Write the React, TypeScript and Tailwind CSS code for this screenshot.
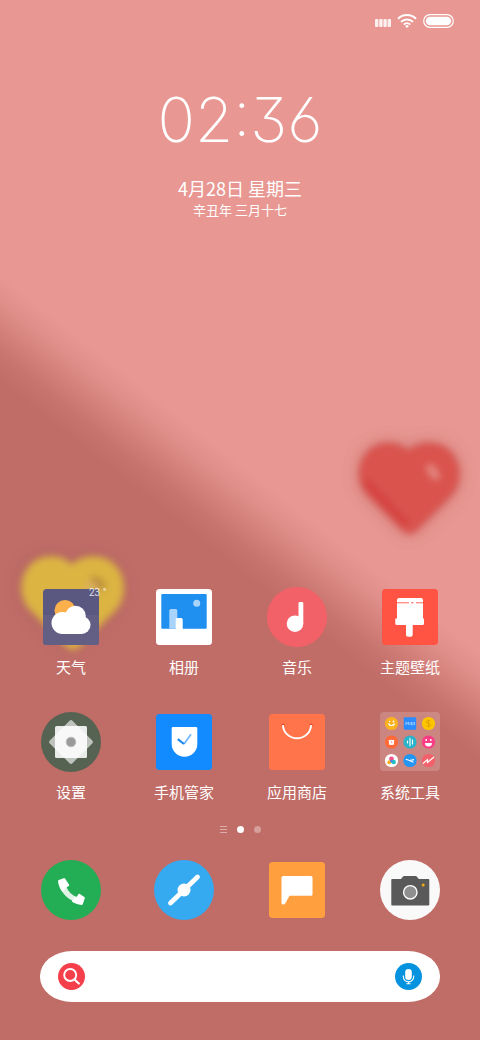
import type { ReactNode } from "react";

interface AppItem {
    name: string;
    icon: ReactNode;
    badge?: string;
}

const Icon = ({ children }: { children: ReactNode }) => (
    <svg viewBox="0 0 60 60" className="size-15" aria-hidden="true">
        {children}
    </svg>
);

const Tile = ({ fill }: { fill: string }) => (
    <rect x="2" y="2" width="56" height="56" rx="3.5" fill={fill} />
);

const Disc = ({ fill }: { fill: string }) => <circle cx="30" cy="30" r="30" fill={fill} />;

const WeatherIcon = () => (
    <Icon>
        <Tile fill="#5a5780" />
        <path d="M2 28h56v26.500a3.500 3.500 0 0 1-3.500 3.500h-49a3.500 3.500 0 0 1-3.500-3.500z" fill="#635f84" />
        <circle cx="24" cy="23.500" r="10.500" fill="#fbb04c" />
        <g fill="#fff">
            <circle cx="34.500" cy="29" r="10.300" />
            <circle cx="21.500" cy="36" r="11" />
            <circle cx="40.500" cy="38" r="9" />
            <rect x="21" y="34" width="20" height="13" />
        </g>
    </Icon>
);

const GalleryIcon = () => (
    <Icon>
        <Tile fill="#fff" />
        <rect x="7.300" y="7" width="45.400" height="34.700" rx="1" fill="#1f8ff0" />
        <path d="M15.300 41.700V23.500a1.500 1.500 0 0 1 1.500-1.500h5a1.500 1.500 0 0 1 1.500 1.500v18.200z" fill="#a8d3fa" />
        <path d="M21.700 43V32.500a1.500 1.500 0 0 1 1.500-1.500h4a1.500 1.500 0 0 1 1.500 1.500V43z" fill="#fff" />
        <circle cx="42.700" cy="16.300" r="3.500" fill="#a8d3fa" />
    </Icon>
);

const MusicIcon = () => (
    <Icon>
        <Disc fill="#f26168" />
        <circle cx="28" cy="36.700" r="8.300" fill="#fff" />
        <path d="M31.500 16.300a1.300 1.300 0 0 1 1.300-1.300h2.200a1.300 1.300 0 0 1 1.300 1.300v20.400h-4.800z" fill="#fff" />
    </Icon>
);

const ThemeIcon = () => (
    <Icon>
        <Tile fill="#ff5443" />
        <path
            d="M17 13a2 2 0 0 1 2-2h22a2 2 0 0 1 2 2v18.500h1v5a1.500 1.500 0 0 1-1.500 1.500H32.700v9.700a2 2 0 0 1-2 2h-2.700a2 2 0 0 1-2-2V38h-9.200a1.500 1.500 0 0 1-1.500-1.500v-5H17z"
            fill="#fff"
        />
        <path d="M17 15.800h12M31 15.800h2.500M36 15.800h7" stroke="#ff5443" strokeWidth="0.9" />
    </Icon>
);

const SettingsIcon = () => (
    <Icon>
        <Disc fill="#566352" />
        <rect x="14" y="14" width="32" height="32" rx="2" fill="#fff" fillOpacity="0.62" transform="rotate(45 30 30)" />
        <rect x="14" y="14" width="32" height="32" rx="1.500" fill="#fff" fillOpacity="0.88" />
        <circle cx="30" cy="30" r="4.800" fill="#9a9a9a" stroke="#bdbdbd" strokeWidth="1" />
    </Icon>
);

const SecurityIcon = () => (
    <Icon>
        <Tile fill="#118bff" />
        <path d="M17.700 16.300a1.300 1.300 0 0 1 1.300-1.300h23a1.300 1.300 0 0 1 1.300 1.300V32a12.800 12.800 0 0 1-25.600 0z" fill="#fff" />
        <path d="m30 32 7-9.800" stroke="#6bb8ff" strokeWidth="1.700" />
        <path d="m23.800 27.200 6.200 4.800" stroke="#1a86f0" strokeWidth="2.200" />
    </Icon>
);

const StoreIcon = () => (
    <Icon>
        <Tile fill="#ff744b" />
        <circle cx="16" cy="13" r="1.600" fill="#e8472a" />
        <circle cx="44" cy="13" r="1.600" fill="#e8472a" />
        <path d="M16 13a14 13.300 0 0 0 28 0" fill="none" stroke="#fff" strokeWidth="1.900" />
    </Icon>
);

const ToolsFolderIcon = () => (
    <Icon>
        <rect width="60" height="59" rx="4" fill="#fff" fillOpacity="0.18" />
        <circle cx="11.500" cy="11.500" r="6.600" fill="#fbb21e" />
        <path d="M8.500 11.500a3.200 3.200 0 0 0 6 0" fill="none" stroke="#fff" strokeWidth="1.400" />
        <circle cx="9.500" cy="9.500" r="0.700" fill="#fff" />
        <circle cx="13.500" cy="9.500" r="0.900" fill="#fff" />
        <rect x="23.800" y="5.300" width="12.400" height="12.400" rx="0.800" fill="#2b8cff" />
        <path d="M26 13v-2.800l1.200 1.500 1.200-1.500V13M30 10v3M31.500 10v2.800h1.500V10M34.500 10v3" fill="none" stroke="#b9dcff" strokeWidth="0.700" />
        <circle cx="48.500" cy="11.500" r="6.600" fill="#fdc500" />
        <path d="M50.500 9.300c-1-1.200-4-1-4 .7 0 2 4.200 1 4.200 3.100 0 1.700-3.300 1.900-4.400.5M48.500 7.500v8" fill="none" stroke="#dda300" strokeWidth="0.900" />

        <circle cx="11.500" cy="30" r="6.600" fill="#ff6a36" />
        <circle cx="11.500" cy="30.300" r="2.600" fill="#fff" />
        <path d="M8.800 28.300l1 .8M14.200 28.300l-1 .8M9.300 32.500l.8-.8M13.700 32.500l-.8-.8" stroke="#fff" strokeWidth="1.300" />
        <path d="M11.500 29v1.500h1" fill="none" stroke="#ff6a36" strokeWidth="0.600" />
        <circle cx="30" cy="30" r="6.600" fill="#2ab3c9" />
        <path d="M27.500 29v2M30 26.300v7.400M32.500 28v4" stroke="#fff" strokeWidth="1.100" strokeLinecap="round" />
        <circle cx="48.500" cy="30" r="6.600" fill="#fb3d85" />
        <path d="M45 31h7a3.500 3.500 0 0 1-7 0z" fill="#fff" />
        <path d="M46.200 27v2M50.800 27v2" stroke="#fff" strokeWidth="1.400" />

        <circle cx="11.500" cy="48.500" r="6.600" fill="#fff" />
        <circle cx="11.500" cy="47" r="2.400" fill="#f2558b" />
        <circle cx="9.300" cy="50.300" r="2" fill="#fbb21e" />
        <circle cx="13.600" cy="50" r="2.300" fill="#22c0c6" />
        <circle cx="11.300" cy="49.300" r="1.200" fill="#4b7df0" />
        <circle cx="30" cy="48.500" r="6.600" fill="#2196f3" />
        <path d="m25.800 47.300 3.700 1.200 4.500-.9M29.500 48.500l4 1.700" fill="none" stroke="#fff" strokeWidth="1.200" />
        <circle cx="48.500" cy="48.500" r="6.600" fill="#f3606a" />
        <path d="m43 51.500 4.500-4v3l6.500-5.500" fill="none" stroke="#fff" strokeWidth="1.200" />
    </Icon>
);

const PhoneIcon = () => (
    <Icon>
        <Disc fill="#23ae56" />
        <path d="M18.500 25c2 9 10 16.500 20.500 18l-3-6c-5-1.500-8.500-5-10.500-10z" fill="#dff3e6" />
        <path d="M17 21.200c0-.6.300-.9.800-1.100l4.900-1.900c.5-.2 1 0 1.300.4l4 6c.3.500.2 1-.2 1.300l-3.600 2.400c-.6.500-.8 1-.6 1.700l-2.400 1.500C18.800 28.500 17.300 24.500 17 21.200z" fill="#fff" />
        <path d="M41.800 44c-.1.600-.5.900-1.100.9-4-.3-7.200-1.500-10-3.300l2.500-4c.8.500 1.600.3 2.200-.4l2-3c.4-.5.900-.6 1.400-.3l4.500 3c.5.300.7.700.5 1.300z" fill="#fff" />
    </Icon>
);

const BrowserIcon = () => (
    <Icon>
        <Disc fill="#35aaf0" />
        <path d="M16.500 43 43.500 17" stroke="#fff" strokeWidth="4.800" strokeLinecap="round" />
        <circle cx="30" cy="30" r="6.500" fill="#fff" />
    </Icon>
);

const MessageIcon = () => (
    <Icon>
        <Tile fill="#ff9f3e" />
        <path d="M14.500 17.500a1.500 1.500 0 0 1 1.500-1.500h28a1.500 1.500 0 0 1 1.500 1.500v16.700a1.500 1.500 0 0 1-1.500 1.500H22.500l-4.300 7.800c-.4.700-.9 1-1.600 1h-.9c-.8 0-1.200-.5-1.200-1.200z" fill="#fff" />
    </Icon>
);

const CameraIcon = () => (
    <Icon>
        <Disc fill="#f9f9f9" />
        <path d="M12.300 19H21l2-2.400c.4-.5.800-.7 1.400-.7h11c.6 0 1 .2 1.400.7l2 2.400h9.500c.6 0 1 .4 1 1v24.500c0 .6-.4 1-1 1h-36c-.6 0-1-.4-1-1V20c0-.6.400-1 1-1z" fill="#595959" />
        <circle cx="30.300" cy="32.300" r="6.700" fill="#8f8f8f" stroke="#fff" strokeWidth="1.400" />
        <circle cx="43.200" cy="25" r="1.500" fill="#f5a811" />
    </Icon>
);

const apps: AppItem[] = [
    { name: "天气", icon: <WeatherIcon />, badge: "23 °" },
    { name: "相册", icon: <GalleryIcon /> },
    { name: "音乐", icon: <MusicIcon /> },
    { name: "主题壁纸", icon: <ThemeIcon /> },
    { name: "设置", icon: <SettingsIcon /> },
    { name: "手机管家", icon: <SecurityIcon /> },
    { name: "应用商店", icon: <StoreIcon /> },
    { name: "系统工具", icon: <ToolsFolderIcon /> },
];

const dock: AppItem[] = [
    { name: "电话", icon: <PhoneIcon /> },
    { name: "浏览器", icon: <BrowserIcon /> },
    { name: "短信", icon: <MessageIcon /> },
    { name: "相机", icon: <CameraIcon /> },
];

const Wallpaper = () => (
    <svg
        viewBox="0 0 480 1040"
        preserveAspectRatio="xMidYMid slice"
        className="absolute inset-0 -z-10 size-full"
        aria-hidden="true"
    >
        <defs>
            <linearGradient id="fold" gradientUnits="userSpaceOnUse" x1="0" y1="275" x2="-52" y2="341">
                <stop offset="0" stopColor="#e89792" />
                <stop offset="0.25" stopColor="#e08e89" />
                <stop offset="0.75" stopColor="#c7736e" />
                <stop offset="1" stopColor="#c06c67" />
            </linearGradient>
            <filter id="soft" x="-30%" y="-30%" width="160%" height="160%">
                <feGaussianBlur stdDeviation="3.5" />
            </filter>
            <filter id="halo" x="-50%" y="-50%" width="200%" height="200%">
                <feGaussianBlur stdDeviation="9" />
            </filter>
            <path
                id="heart"
                d="M51 91C46 91 43 87 38 82L9 53C-9 34 2 0 29 0c9 0 16 3 20 8C54 3 62 0 70 0 99 0 109 34 92 53L63 82C58 87 55 91 51 91z"
            />
        </defs>
        <rect width="480" height="1040" fill="url(#fold)" />
        <g transform="translate(359 443)">
            <use href="#heart" fill="#a04040" opacity="0.4" filter="url(#halo)" />
            <g filter="url(#soft)">
                <use href="#heart" fill="#da524e" />
                <path d="M6 38 48 82" stroke="#d43f3c" strokeWidth="7" />
                <ellipse cx="74" cy="29" rx="4" ry="9" fill="#e58a84" transform="rotate(-35 74 29)" />
            </g>
        </g>
        <g transform="translate(21 556)">
            <use href="#heart" fill="#8a4a58" opacity="0.4" filter="url(#halo)" />
            <g filter="url(#soft)">
                <use href="#heart" fill="#dcb443" transform="scale(1.03)" />
                <ellipse cx="77" cy="27" rx="9" ry="5" fill="#b98a3a" transform="rotate(40 77 27)" />
                <ellipse cx="71" cy="31" rx="5" ry="6" fill="#d9b062" />
            </g>
        </g>
    </svg>
);

const StatusBar = () => (
    <header className="flex h-7 items-end justify-end gap-1.5 pr-6.5">
        <svg viewBox="0 0 16 9" className="h-[9px] w-4" fill="#fff" fillOpacity="0.85" aria-hidden="true">
            <rect width="3.400" height="8" rx="1" />
            <rect x="4.200" width="3.400" height="8" rx="1" />
            <rect x="8.400" width="3.400" height="8" rx="1" />
            <rect x="12.600" width="3.400" height="8" rx="1" />
        </svg>
        <svg viewBox="0 0 20 14" className="h-3.5 w-5" fill="none" stroke="#fff" strokeWidth="2" aria-hidden="true">
            <path d="M1 4.800a12.800 12.800 0 0 1 18 0M4 7.900a8.500 8.500 0 0 1 12 0M6.800 10.600a4.600 4.600 0 0 1 6.400 0" />
            <circle cx="10" cy="12.300" r="1.400" fill="#fff" stroke="none" />
        </svg>
        <svg viewBox="0 0 31 14" className="h-3.5 w-[31px]" aria-hidden="true">
            <rect x="0.700" y="0.700" width="29.600" height="12.600" rx="6.300" fill="none" stroke="#fff" strokeWidth="1.200" />
            <rect x="2.800" y="2.800" width="25.400" height="8.400" rx="4.200" fill="#fff" />
        </svg>
    </header>
);

const AppButton = ({ name, icon, badge }: AppItem) => (
    <button type="button" className="flex w-15 flex-col items-center gap-2.5">
        <span className="relative">
            {icon}
            {badge && (
                <span className="absolute -top-0.5 left-12 font-['Roboto',sans-serif] text-[10px] leading-4 whitespace-nowrap text-white/80">
                    {badge}
                </span>
            )}
        </span>
        <span className="text-[15px] leading-5 whitespace-nowrap">{name}</span>
    </button>
);

export default function App() {
    return (
        <main className="relative isolate flex min-h-screen flex-col overflow-hidden font-['Noto_Sans_CJK_SC',sans-serif] text-white">
            <Wallpaper />
            <StatusBar />

            <section className="mt-15 flex flex-col items-center">
                <h1 className="font-['Inter',sans-serif] text-[62px] leading-16 font-extralight [font-feature-settings:'cv03','cv09','case']">
                    02:36
                </h1>
                <p className="mt-6 text-[18px] leading-6">4月28日 星期三</p>
                <p className="text-[13px] leading-5">辛丑年 三月十七</p>
            </section>

            <div className="mt-auto px-10 pb-9.5">
                <div className="grid grid-cols-[repeat(4,60px)] justify-between gap-y-[35px] pl-px">
                    {apps.map((app) => (
                        <AppButton key={app.name} {...app} />
                    ))}
                </div>

                {/* Page indicator */}
                <div className="mt-[21px] flex h-3 items-center justify-center gap-2.5">
                    <svg viewBox="0 0 7 7" className="size-[7px]" stroke="#fff" strokeOpacity="0.45" aria-hidden="true">
                        <path d="M0 .500h7M0 3.500h7M0 6.500h7" />
                    </svg>
                    <span className="size-[7px] rounded-full bg-white" />
                    <span className="size-[7px] rounded-full bg-white/35" />
                </div>

                <nav className="mt-[25px] flex justify-between pl-px">
                    {dock.map(({ name, icon }) => (
                        <button key={name} type="button" aria-label={name}>
                            {icon}
                        </button>
                    ))}
                </nav>

                <form className="mt-[31px] flex h-[51px] items-center rounded-[32px/25px] bg-white px-[18px]">
                    <button type="button" aria-label="搜索">
                        <svg viewBox="0 0 27 27" className="size-[27px]" fill="none" stroke="#fff" aria-hidden="true">
                            <circle cx="13.500" cy="13.500" r="13.500" fill="#f5404b" stroke="none" />
                            <circle cx="12.200" cy="12" r="6" strokeWidth="1.900" />
                            <path d="m16.500 16.500 4.300 4" strokeWidth="2.200" strokeLinecap="round" />
                        </svg>
                    </button>
                    <input
                        type="text"
                        aria-label="搜索内容"
                        className="h-full min-w-0 flex-1 bg-transparent px-3 text-[15px] text-gray-800 outline-none"
                    />
                    <button type="button" aria-label="语音搜索">
                        <svg viewBox="0 0 27 27" className="size-[27px]" fill="none" stroke="#fff" aria-hidden="true">
                            <circle cx="13.500" cy="13.500" r="13.500" fill="#0593df" stroke="none" />
                            <rect x="10.200" y="6" width="6.600" height="11" rx="3.300" fill="#fff" stroke="none" />
                            <path d="M8.300 12.500v1.200a5.200 5.200 0 0 0 10.400 0v-1.200M13.500 19v1.800M11.300 20.800h4.400" strokeWidth="1.100" />
                        </svg>
                    </button>
                </form>
            </div>
        </main>
    );
}
